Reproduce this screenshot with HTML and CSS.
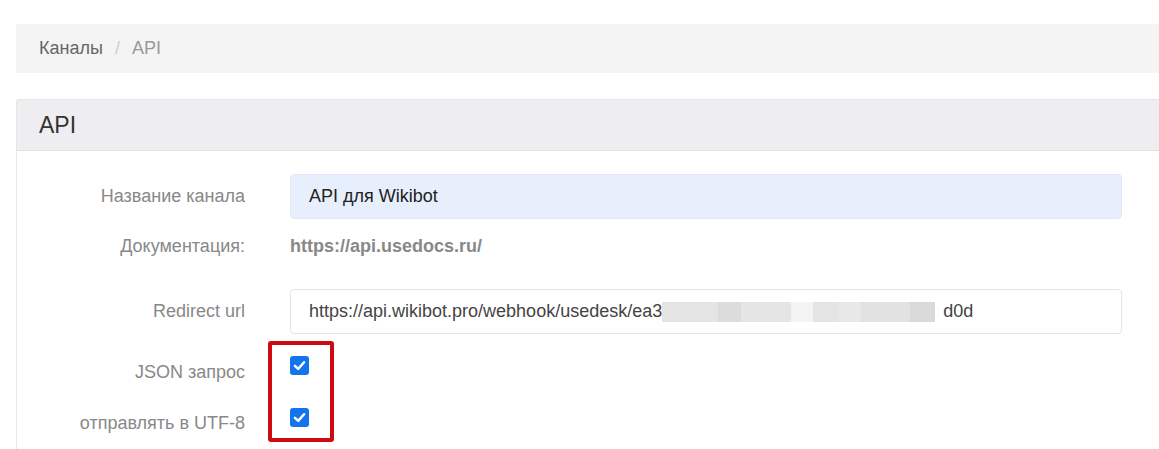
FILE: index.html
```html
<!DOCTYPE html>
<html lang="ru">
<head>
<meta charset="utf-8">
<title>API</title>
<link rel="stylesheet" href="styles.css">
</head>
<body>
<div class="page">
  <nav class="breadcrumb">
    <a class="crumb" href="#">Каналы</a>
    <span class="sep">/</span>
    <span class="crumb-current">API</span>
  </nav>

  <section class="card">
    <header class="card-header">API</header>
    <div class="card-body">
      <div class="row row-input">
        <div class="label">Название канала</div>
        <div class="input input-autofill">API для Wikibot</div>
      </div>
      <div class="row row-text">
        <div class="label">Документация:</div>
        <a class="doc-link" href="#">https://api.usedocs.ru/</a>
      </div>
      <div class="row row-input row-redirect">
        <div class="label">Redirect url</div>
        <div class="input input-plain">https://api.wikibot.pro/webhook/usedesk/ea3<span class="blur"><span class="b1"></span><span class="b2"></span><span class="b3"></span><span class="b4"></span><span class="b5"></span><span class="b6"></span><span class="b7"></span><span class="b8"></span></span>d0d</div>
      </div>
      <div class="checks">
        <div class="row row-check">
          <div class="label">JSON запрос</div>
          <span class="checkbox"><svg viewBox="0 0 20 20" width="20" height="20"><path d="M5.2 10.4 L8.6 13.6 L14.8 6.6" fill="none" stroke="#fff" stroke-width="2.6" stroke-linecap="round" stroke-linejoin="round"/></svg></span>
        </div>
        <div class="row row-check row-check2">
          <div class="label">отправлять в UTF-8</div>
          <span class="checkbox"><svg viewBox="0 0 20 20" width="20" height="20"><path d="M5.2 10.4 L8.6 13.6 L14.8 6.6" fill="none" stroke="#fff" stroke-width="2.6" stroke-linecap="round" stroke-linejoin="round"/></svg></span>
        </div>
        <div class="highlight"></div>
      </div>
    </div>
  </section>
</div>
</body>
</html>
```

FILE: styles.css
```css
* { box-sizing: border-box; }

html, body {
  margin: 0;
  padding: 0;
  background: #fff;
  overflow: hidden;
}

body {
  font-family: "Liberation Sans", Arial, sans-serif;
  color: #333;
}

.page {
  padding: 24px 0 0 16px;
  width: 1200px;
}

.breadcrumb {
  display: flex;
  align-items: center;
  height: 49px;
  padding-left: 23px;
  background: #f4f4f4;
  font-size: 18px;
}

.crumb {
  color: #666;
  text-decoration: none;
}

.sep {
  color: #ccc;
  padding: 0 12px;
}

.crumb-current {
  color: #999;
}

.card {
  margin-top: 26px;
  border: 1px solid #e6e6e6;
  border-right: none;
  border-radius: 3px 0 0 0;
  height: 400px;
}

.card-header {
  height: 51px;
  display: flex;
  align-items: center;
  padding-left: 22px;
  background: #eeeef0;
  border-bottom: 1px solid #e2e2e4;
  font-size: 23px;
  color: #333;
}

.card-body {
  padding-top: 23px;
}

.row {
  display: grid;
  grid-template-columns: 228px 832px;
  column-gap: 45px;
  align-items: center;
}

.label {
  text-align: right;
  font-size: 18px;
  color: #888;
  white-space: nowrap;
}

.row-input {
  height: 45px;
}

.row-text {
  height: 54px;
}

.row-redirect {
  margin-top: 16px;
}

.input {
  height: 45px;
  display: flex;
  align-items: center;
  padding-left: 18px;
  border-radius: 4px;
  font-size: 18px;
  white-space: nowrap;
}

.input-autofill {
  background: #e8effc;
  border: 1px solid #e2e8f4;
  color: #222;
}

.input-plain {
  background: #fff;
  border: 1px solid #e4e4e4;
  color: #444;
}

.blur {
  display: inline-flex;
  height: 20px;
  margin: 0 8px 0 0;
}

.blur span { display: block; height: 20px; }
.blur .b1 { width: 56px; background: #e4e4e4; }
.blur .b2 { width: 23px; background: #dcdcdc; }
.blur .b3 { width: 50px; background: #e5e5e5; }
.blur .b4 { width: 22px; background: #f3f3f3; }
.blur .b5 { width: 25px; background: #e4e4e4; }
.blur .b6 { width: 23px; background: #e8e8e8; }
.blur .b7 { width: 49px; background: #e2e2e2; }
.blur .b8 { width: 25px; background: #dadada; }

.doc-link {
  font-size: 18px;
  font-weight: bold;
  color: #888;
  text-decoration: none;
}

.checks {
  position: relative;
  margin-top: 18px;
}

.row-check {
  height: 40px;
  align-items: start;
}

.row-check .label {
  line-height: 40px;
}

.row-check2 {
  margin-top: 11px;
}

.checkbox {
  display: block;
  width: 19px;
  height: 19px;
  margin-top: 4px;
  border-radius: 3px;
  background: #1275ee;
  overflow: hidden;
}

.checkbox svg {
  display: block;
  width: 19px;
  height: 19px;
}

.row-check2 .checkbox {
  margin-top: 5px;
}

.highlight {
  position: absolute;
  left: 251px;
  top: -11px;
  width: 66px;
  height: 101px;
  border: 4px solid #cc0a0f;
  border-radius: 3px;
}
```
